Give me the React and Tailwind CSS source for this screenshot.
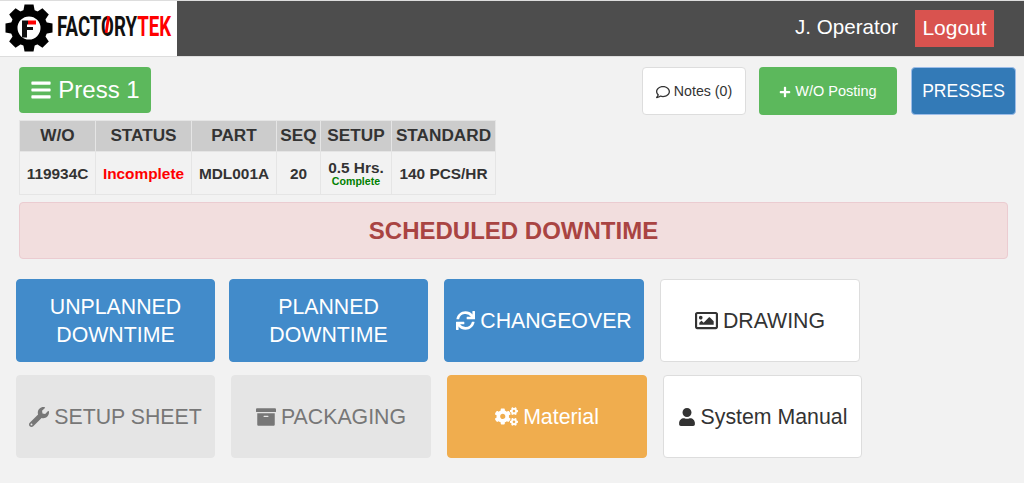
import { FaBars, FaPlus, FaRegComment, FaSync, FaRegImage, FaWrench, FaArchive, FaCogs, FaUser } from "react-icons/fa";

const columns = [
  { title: "W/O", value: "119934C", width: "w-[76px]" },
  { title: "STATUS", value: "Incomplete", width: "w-[96px]", color: "text-[#ff0000]" },
  { title: "PART", value: "MDL001A", width: "w-[85px]" },
  { title: "SEQ", value: "20", width: "w-[44px]" },
  { title: "SETUP", value: "0.5 Hrs.", width: "w-[71px]", note: "Complete" },
  { title: "STANDARD", value: "140 PCS/HR", width: "w-[104px]" },
];

const base = "flex h-[83px] w-[199px] items-center justify-center gap-[5px] rounded border text-center text-[21.3px] leading-[28px]";
const blue = "border-[#428bca] bg-[#428bca] text-white";
const muted = "border-[#e5e5e5] bg-[#e5e5e5] text-[#777777]";
const white = "border-[#dddddd] bg-white text-[#333333]";

const Gear = () => {
  const teeth = [0, 45, 90, 135, 180, 225, 270, 315];
  return (
    <svg width="50" height="50" viewBox="0 0 50 50" className="mt-[-2px] shrink-0">
      {teeth.map((a) => (
        <path key={a} d="M20.5 1.5h9l1.5 8h-12z" fill="#000" transform={`rotate(${a} 25 25)`} />
      ))}
      <circle cx="25" cy="25" r="15" fill="#fff" stroke="#000" strokeWidth="7" />
      <path d="M18 17.5h6v4h-1v13h-5z" fill="#111" />
      <path d="M23 24h6v3h-6z" fill="#111" />
      <path d="M24 17.5h8v4h-8z" fill="#ff0000" />
    </svg>
  );
};

const Logo = () => (
  <div className="flex h-full w-[177px] shrink-0 items-center bg-white pl-[4px]">
    <Gear />
    <div className="w-[118px] pl-[3px]">
      <span className="inline-block origin-left scale-x-[0.69] whitespace-nowrap font-['Roboto',sans-serif] text-[27px] font-bold leading-none text-[#111111]">
        FACT<span className="relative">O<span className="absolute left-[7px] top-[5px] h-[17px] w-[4px] rotate-[12deg] bg-[#ff0000]"></span></span>RY<span className="text-[#ff0000]">TEK</span>
      </span>
    </div>
  </div>
);

export default function App() {
  return (
    <div className="h-[483px] overflow-hidden bg-[#f2f2f2] font-['Liberation_Sans',Arial,sans-serif] text-[#333333]">
      {/* header */}
      <div className="flex h-[57px] border-y border-[#dddddd] bg-[#4d4d4d]">
        <Logo />
        <div className="flex flex-1 items-center justify-end pr-[30px]">
          <span className="mt-[-3px] text-[20.6px] text-white">J. Operator</span>
          <a className="ml-[17px] flex h-[37px] w-[79px] items-center justify-center bg-[#d9534f] pb-[2px] text-[21px] text-white">Logout</a>
        </div>
      </div>

      {/* top bar */}
      <div className="flex items-start pl-[19px] pr-[8px] pt-[10px]">
        <button className="flex h-[46px] w-[132px] items-center justify-center gap-[6px] rounded bg-[#5cb85c] text-[24px] text-white">
          <FaBars className="h-[22px] w-[22px]" /> Press 1
        </button>
        <div className="ml-auto flex gap-[13px]">
          <button className="flex h-[48px] w-[104px] items-center justify-center gap-[4px] rounded border border-[#dddddd] bg-white pt-[1px] text-[14.2px] text-[#333333]">
            <FaRegComment className="h-[14px] w-[14px]" /> Notes (0)
          </button>
          <button className="flex h-[48px] w-[138px] items-center justify-center gap-[4px] rounded bg-[#5cb85c] pt-[1px] text-[14.5px] text-white">
            <FaPlus className="h-[12px] w-[12px]" /> W/O Posting
          </button>
          <button className="ml-[1px] flex h-[48px] w-[105px] items-center justify-center rounded border border-[#9dbde8] bg-[#337ab7] text-[17.5px] text-white">
            PRESSES
          </button>
        </div>
      </div>

      {/* work order table */}
      <div className="pl-[19px] pt-[5px]">
        <table className="table-fixed border-collapse text-center">
          <thead>
            <tr>
              {columns.map((c) => (
                <th key={c.title} className={`${c.width} h-[31px] whitespace-nowrap border border-[#e5e5e5] bg-[#cccccc] p-0 text-[17.2px] font-bold`}>
                  {c.title}
                </th>
              ))}
            </tr>
          </thead>
          <tbody>
            <tr>
              {columns.map((c) => (
                <td key={c.title} className={`h-[43px] whitespace-nowrap border border-[#e5e5e5] p-0 text-[15.4px] font-bold leading-[17px] ${c.color || ""}`}>
                  {c.value}
                  {c.note && <div className="text-[10.6px] leading-[11px] text-[#008000]">{c.note}</div>}
                </td>
              ))}
            </tr>
          </tbody>
        </table>
      </div>

      {/* alert */}
      <div className="ml-[19px] mr-[16px] mt-[7px] flex h-[57px] items-center justify-center rounded border border-[#ebccd1] bg-[#f2dede] text-[24px] font-bold text-[#a94442]">
        SCHEDULED DOWNTIME
      </div>

      {/* action buttons */}
      <div className="flex pl-[16px] pt-[20px]">
        <button className={`${base} ${blue}`}>UNPLANNED<br />DOWNTIME</button>
        <button className={`${base} ${blue} ml-[14px]`}>PLANNED<br />DOWNTIME</button>
        <button className={`${base} ${blue} ml-[16px] w-[200px]`}>
          <FaSync className="h-[19px] w-[19px]" /> CHANGEOVER
        </button>
        <button className={`${base} ${white} ml-[16px] w-[200px]`}>
          <FaRegImage className="h-[23px] w-[23px]" /> DRAWING
        </button>
      </div>
      <div className="flex pl-[16px] pt-[13px]">
        <button className={`${base} ${muted}`}>
          <FaWrench className="h-[20px] w-[20px]" /> SETUP SHEET
        </button>
        <button className={`${base} ${muted} ml-[16px] w-[200px]`}>
          <FaArchive className="h-[20px] w-[20px]" /> PACKAGING
        </button>
        <button className={`${base} ml-[16px] w-[200px] border-[#f0ad4e] bg-[#f0ad4e] text-white`}>
          <FaCogs className="h-[23px] w-[23px]" /> Material
        </button>
        <button className={`${base} ${white} ml-[16px]`}>
          <FaUser className="h-[18px] w-[18px]" /> System Manual
        </button>
      </div>
    </div>
  );
}
